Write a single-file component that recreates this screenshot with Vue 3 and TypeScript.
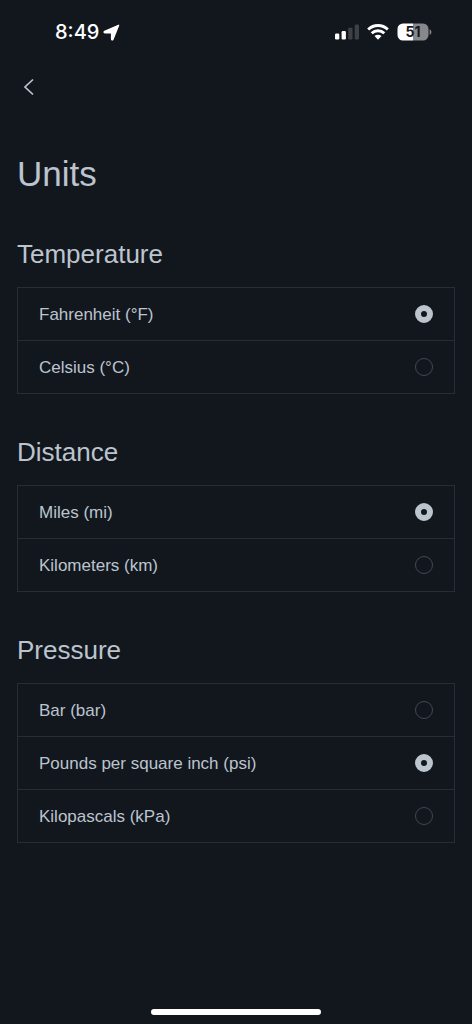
<script setup lang="ts">
import { reactive } from 'vue'

interface Option {
  value: string
  label: string
}

interface Group {
  id: string
  title: string
  options: Option[]
}

const groups: Group[] = [
  {
    id: 'temperature',
    title: 'Temperature',
    options: [
      { value: 'f', label: 'Fahrenheit (°F)' },
      { value: 'c', label: 'Celsius (°C)' },
    ],
  },
  {
    id: 'distance',
    title: 'Distance',
    options: [
      { value: 'mi', label: 'Miles (mi)' },
      { value: 'km', label: 'Kilometers (km)' },
    ],
  },
  {
    id: 'pressure',
    title: 'Pressure',
    options: [
      { value: 'bar', label: 'Bar (bar)' },
      { value: 'psi', label: 'Pounds per square inch (psi)' },
      { value: 'kpa', label: 'Kilopascals (kPa)' },
    ],
  },
]

const selected = reactive<Record<string, string>>({
  temperature: 'f',
  distance: 'mi',
  pressure: 'psi',
})
</script>

<template>
  <div class="screen">
    <header class="status">
      <div class="clock">
        <span>8:49</span>
        <svg width="17" height="17" viewBox="0 0 17 17" aria-hidden="true">
          <path d="M15.600 1.300 9.900 15.400c-.3.700-1.200.600-1.300-.2V8.800H1.900C.9 8.700.8 7.700 1.600 7.300Z" fill="#fff" stroke="#fff" stroke-width="1.400" stroke-linejoin="round" />
        </svg>
      </div>
      <div class="indicators">
        <svg width="24" height="16" viewBox="0 0 24 16" aria-hidden="true">
          <rect x="0" y="9.500" width="4.300" height="6" rx="1.200" fill="#fff" />
          <rect x="6.600" y="7" width="4.300" height="8.500" rx="1.200" fill="#fff" />
          <rect x="13.200" y="3.800" width="4.300" height="11.700" rx="1.200" fill="#3d4046" />
          <rect x="19.700" y="0.500" width="4.300" height="15" rx="1.200" fill="#3d4046" />
        </svg>
        <svg width="22" height="16" viewBox="0 0 22 16" aria-hidden="true">
          <g fill="none" stroke="#fff" stroke-width="2.900">
            <path d="M1.200 5.500a14 14 0 0 1 19.600 0" />
            <path d="M4.700 9.300a8.900 8.900 0 0 1 12.600 0" />
          </g>
          <path d="M7.500 12.100a4.900 4.900 0 0 1 7 0L11 15.800Z" fill="#fff" />
        </svg>
        <div class="battery">
          <svg width="35" height="18" viewBox="0 0 35 18" aria-hidden="true">
            <path d="M16 .5H6A5.500 5.500 0 0 0 .5 6v6A5.500 5.500 0 0 0 6 17.500h10Z" fill="#fff" />
            <path d="M16 .5h10A5.500 5.500 0 0 1 31.500 6v6a5.500 5.500 0 0 1-5.500 5.500H16Z" fill="#86888c" />
            <path d="M32.600 6.200c2.400.9 2.400 4.700 0 5.600Z" fill="#86888c" />
          </svg>
          <span class="level">51</span>
        </div>
      </div>
    </header>

    <nav class="nav">
      <button class="back" type="button" aria-label="Back">
        <svg width="12" height="18" viewBox="0 0 12 18" aria-hidden="true">
          <path d="M10 1.500 2 9l8 7.500" fill="none" stroke="#bcc4ce" stroke-width="1.700" />
        </svg>
      </button>
    </nav>

    <main class="content">
      <h1>Units</h1>
      <section v-for="group in groups" :key="group.id" class="group">
        <h2 :id="`${group.id}-title`">{{ group.title }}</h2>
        <div class="card" role="radiogroup" :aria-labelledby="`${group.id}-title`">
          <label v-for="option in group.options" :key="option.value" class="row">
            <span class="name">{{ option.label }}</span>
            <input v-model="selected[group.id]" type="radio" :name="group.id" :value="option.value" />
          </label>
        </div>
      </section>
    </main>

    <footer class="home"><span class="home-bar"></span></footer>
  </div>
</template>

<style>
body {
  margin: 0;
  background: #12171e;
}
</style>

<style scoped>
.screen {
  box-sizing: border-box;
  display: flex;
  flex-direction: column;
  min-height: 100vh;
  background: #12171e;
  color: #bcc4ce;
  font-family: "Liberation Sans", Arial, sans-serif;
}

.status {
  display: flex;
  align-items: center;
  justify-content: space-between;
  height: 64px;
  padding: 0 40px 0 55px;
  color: #fff;
}

.clock {
  display: flex;
  align-items: center;
  gap: 4px;
  font: 500 20px/24px Inter, sans-serif;
}

.indicators {
  display: flex;
  align-items: center;
  gap: 8px;
}

.battery {
  position: relative;
  display: flex;
}

.level {
  position: absolute;
  inset: 0 3px 0 0;
  color: #15181d;
  font: 700 14px/18px Inter, sans-serif;
  text-align: center;
}

.nav {
  display: flex;
  align-items: center;
  height: 46px;
  padding: 0 12px;
}

.back {
  display: flex;
  align-items: center;
  justify-content: center;
  width: 34px;
  height: 40px;
  padding: 0;
  border: 0;
  background: none;
  cursor: pointer;
}

.content {
  flex: 1;
  padding: 44px 17px 24px;
}

h1 {
  margin: 0 0 44px;
  font-size: 35px;
  font-weight: 400;
  line-height: 40px;
}

h2 {
  margin: 0 0 17px;
  font-size: 26px;
  font-weight: 400;
  line-height: 32px;
}

.group + .group {
  margin-top: 42px;
}

.card {
  border: 1px solid #282d35;
}

.row {
  display: flex;
  align-items: center;
  justify-content: space-between;
  height: 52px;
  padding: 0 21px;
  font-size: 17px;
  line-height: 24px;
  cursor: pointer;
}

.row + .row {
  border-top: 1px solid #282d35;
}

.name {
  padding-top: 2px;
}

.row input {
  box-sizing: border-box;
  appearance: none;
  width: 18px;
  height: 18px;
  margin: 0;
  border: 1px solid #424850;
  border-radius: 50%;
  cursor: pointer;
}

.row input:checked {
  border: 6px solid #bcc4ce;
}

.home {
  display: flex;
  justify-content: center;
  padding-bottom: 9px;
}

.home-bar {
  width: 36%;
  height: 6px;
  border-radius: 3px;
  background: #fff;
}
</style>
